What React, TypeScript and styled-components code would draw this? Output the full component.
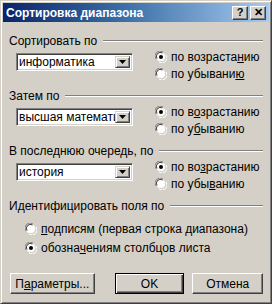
import * as React from 'react';
import styled, { createGlobalStyle } from 'styled-components';

const face = '#d4d0c8';
const shadow = '#808080';
const darkShadow = '#404040';
const font = `'Liberation Sans', Arial, sans-serif`;

const GlobalStyle = createGlobalStyle`
  html, body {
    margin: 0;
    padding: 0;
    background: #ffffff;
  }
  body {
    font-family: ${font};
    font-size: 12px;
    color: #000000;
  }
`;

const Window = styled.div`
  width: 272px;
  height: 304px;
  box-sizing: border-box;
  overflow: hidden;
  background: ${face};
  border-top: 1px solid ${face};
  border-left: 1px solid ${face};
  border-right: 1px solid ${darkShadow};
  border-bottom: 1px solid ${darkShadow};
  box-shadow: inset 1px 1px 0 #ffffff, inset -1px -1px 0 ${shadow};
  padding: 2px 2px 0 2px;
  display: flex;
  flex-direction: column;
`;

const TitleBar = styled.div`
  height: 19px;
  flex-shrink: 0;
  display: flex;
  align-items: center;
  padding: 0 3px 0 3px;
  background: linear-gradient(to right, #0a246a, #3a6ea5 45%, #a6caf0);
`;

const Title = styled.div`
  flex: 1;
  color: #ffffff;
  font-weight: bold;
  font-size: 12px;
`;

const CaptionButton = styled.div<{ $gap?: number }>`
  width: 16px;
  height: 14px;
  box-sizing: border-box;
  margin-left: ${p => p.$gap || 0}px;
  background: ${face};
  border-top: 1px solid #ffffff;
  border-left: 1px solid #ffffff;
  border-right: 1px solid ${darkShadow};
  border-bottom: 1px solid ${darkShadow};
  box-shadow: inset -1px -1px 0 ${shadow};
  display: flex;
  align-items: center;
  justify-content: center;
  font-weight: bold;
  font-size: 11px;
  line-height: 1;
`;

const Body = styled.div`
  padding: 12px 6px 0 6px;
  display: flex;
  flex-direction: column;
`;

const Legend = styled.div<{ $top?: number }>`
  display: flex;
  align-items: center;
  height: 14px;
  margin-top: ${p => p.$top || 0}px;
`;

const LegendLine = styled.div`
  flex: 1;
  height: 0;
  margin-left: 6px;
  border-top: 1px solid ${shadow};
  border-bottom: 1px solid #ffffff;
`;

const SortRow = styled.div`
  display: flex;
  align-items: flex-start;
  margin-top: 2px;
  padding-left: 7px;
`;

const Combo = styled.div`
  width: 117px;
  height: 18px;
  margin-top: 3px;
  box-sizing: border-box;
  background: #ffffff;
  border-top: 1px solid ${shadow};
  border-left: 1px solid ${shadow};
  border-right: 1px solid #ffffff;
  border-bottom: 1px solid #ffffff;
  box-shadow: inset 1px 1px 0 ${darkShadow}, inset -1px -1px 0 ${face};
  display: flex;
  align-items: stretch;
  padding: 2px 2px 2px 2px;
`;

const ComboText = styled.div`
  flex: 1;
  overflow: hidden;
  white-space: nowrap;
  line-height: 13px;
`;

const DropButton = styled.div`
  width: 15px;
  box-sizing: border-box;
  background: ${face};
  border-top: 1px solid ${face};
  border-left: 1px solid ${face};
  border-right: 1px solid ${darkShadow};
  border-bottom: 1px solid ${darkShadow};
  box-shadow: inset 1px 1px 0 #ffffff, inset -1px -1px 0 ${shadow};
  display: flex;
  align-items: center;
  justify-content: center;
`;

const RadioColumn = styled.div`
  display: flex;
  flex-direction: column;
  gap: 3px;
  margin-left: 22px;
`;

const RadioLabel = styled.div<{ $indent?: number }>`
  display: flex;
  align-items: center;
  height: 14px;
  gap: 4px;
  padding-left: ${p => p.$indent || 0}px;
  white-space: nowrap;
`;

const IdentifyList = styled.div`
  display: flex;
  flex-direction: column;
  gap: 5px;
  margin-top: 9px;
`;

const ButtonRow = styled.div`
  display: flex;
  margin-top: 18px;
  padding-left: 1px;
`;

const Button = styled.div<{ $width: number; $gap?: number; $default?: boolean }>`
  width: ${p => p.$width}px;
  height: 21px;
  box-sizing: border-box;
  margin-left: ${p => p.$gap || 0}px;
  background: ${face};
  display: flex;
  align-items: center;
  justify-content: center;
  border: 1px solid ${p => (p.$default ? '#000000' : '#ffffff')};
  ${p =>
    p.$default
      ? `box-shadow: inset 1px 1px 0 #ffffff, inset -1px -1px 0 ${darkShadow}, inset -2px -2px 0 ${shadow};`
      : `border-right-color: ${darkShadow}; border-bottom-color: ${darkShadow}; box-shadow: inset -1px -1px 0 ${shadow};`}
`;

const Radio = ({ checked }: { checked?: boolean }) => (
  <svg width="12" height="12" viewBox="0 0 12 12">
    <path d="M1 8 A5 5 0 0 1 8 1" fill="none" stroke={shadow} strokeWidth="1" />
    <path d="M4 11 A5 5 0 0 0 11 4" fill="none" stroke="#ffffff" strokeWidth="1" />
    <circle cx="6" cy="6" r="4.6" fill="#ffffff" />
    <path d="M2 7.5 A4 4 0 0 1 7.5 2" fill="none" stroke={darkShadow} strokeWidth="1" />
    <path d="M4.5 10 A4 4 0 0 0 10 4.5" fill="none" stroke={face} strokeWidth="1" />
    {checked && <circle cx="6" cy="6" r="2" fill="#000000" />}
  </svg>
);

const Arrow = () => (
  <svg width="7" height="4" viewBox="0 0 7 4">
    <path d="M0 0 H7 L3.5 4 Z" fill="#000000" />
  </svg>
);

const U = styled.span`
  text-decoration: underline;
`;

const SortSection = ({
  title,
  value,
  asc,
  desc,
  top,
}: {
  title: string;
  value: string;
  asc: React.ReactNode;
  desc: React.ReactNode;
  top?: number;
}) => (
  <>
    <Legend $top={top}>
      {title}
      <LegendLine />
    </Legend>
    <SortRow>
      <Combo>
        <ComboText>{value}</ComboText>
        <DropButton>
          <Arrow />
        </DropButton>
      </Combo>
      <RadioColumn>
        <RadioLabel>
          <Radio checked />
          {asc}
        </RadioLabel>
        <RadioLabel>
          <Radio />
          {desc}
        </RadioLabel>
      </RadioColumn>
    </SortRow>
  </>
);

export default function App() {
  return (
    <>
      <GlobalStyle />
      <Window>
        <TitleBar>
          <Title>Сортировка диапазона</Title>
          <CaptionButton>?</CaptionButton>
          <CaptionButton $gap={2}>✕</CaptionButton>
        </TitleBar>
        <Body>
          <SortSection
            title="Сортировать по"
            value="информатика"
            asc={<span>по возраста<U>н</U>ию</span>}
            desc={<span>по убывани<U>ю</U></span>}
          />
          <SortSection
            top={8}
            title="Затем по"
            value="высшая математика"
            asc={<span>по в<U>о</U>зрастанию</span>}
            desc={<span>по у<U>б</U>ыванию</span>}
          />
          <SortSection
            top={8}
            title="В последнюю очередь, по"
            value="история"
            asc={<span>по во<U>з</U>растанию</span>}
            desc={<span>по убы<U>в</U>анию</span>}
          />
          <Legend $top={8}>
            Идентифицировать поля по
            <LegendLine />
          </Legend>
          <IdentifyList>
            <RadioLabel $indent={16}>
              <Radio />
              <span><U>п</U>одписям (первая строка диапазона)</span>
            </RadioLabel>
            <RadioLabel $indent={16}>
              <Radio checked />
              <span>обозна<U>ч</U>ениям столбцов листа</span>
            </RadioLabel>
          </IdentifyList>
          <ButtonRow>
            <Button $width={85}><span>П<U>а</U>раметры...</span></Button>
            <Button $width={70} $gap={20} $default>OK</Button>
            <Button $width={71} $gap={8}>Отмена</Button>
          </ButtonRow>
        </Body>
      </Window>
    </>
  );
}
